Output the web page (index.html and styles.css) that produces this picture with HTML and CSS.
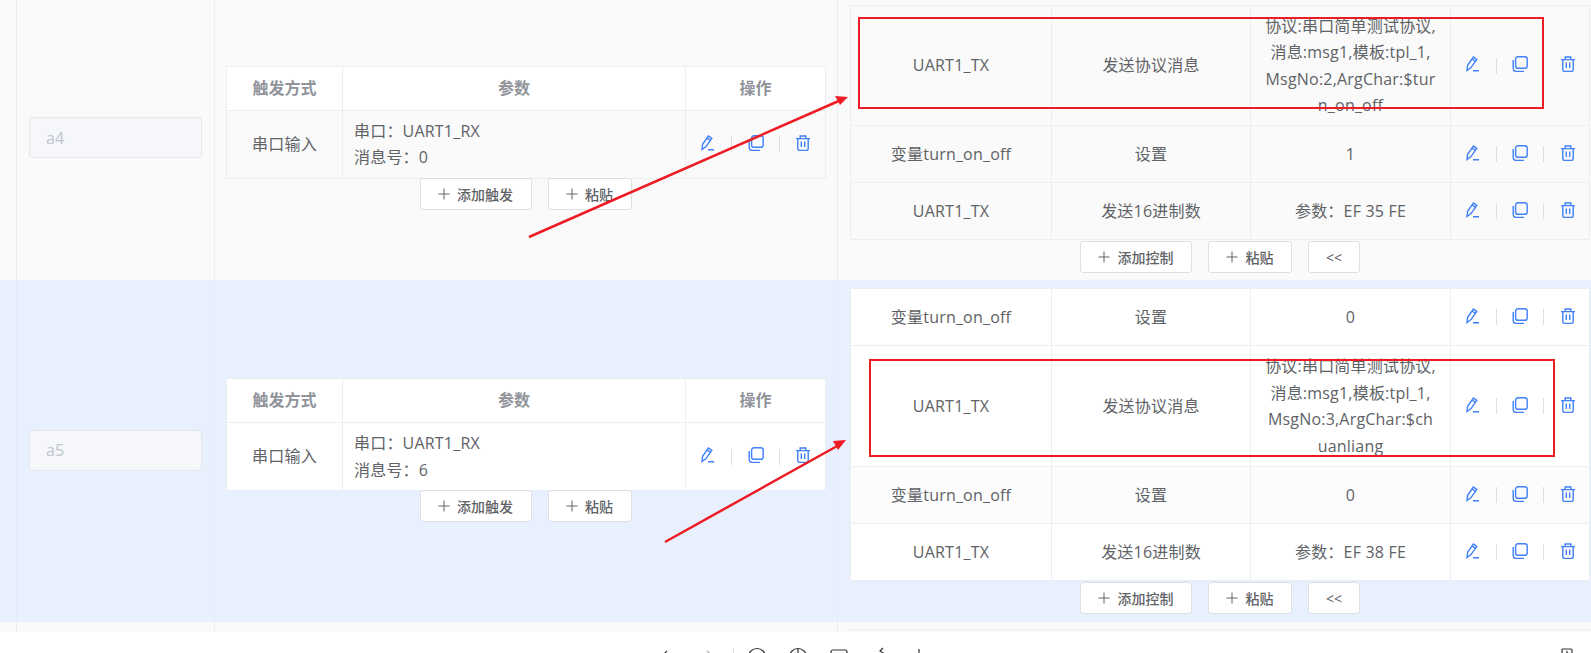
FILE: index.html
```html
<!DOCTYPE html>
<html lang="en">
<head>
    <meta charset="UTF-8">
    <title>Tasks</title>
    <link rel="stylesheet" href="styles.css">
</head>
<body>
    <svg class="icon-defs" width="0" height="0">
        <symbol id="i-edit" viewBox="0 0 16 16">
            <path d="M2 14.5 2.6 9.3 8.4 1.1 11.8 3.5 6 11.6Z M7 3 10.400 5.400 M8 14.8H14"/>
        </symbol>
        <symbol id="i-copy" viewBox="0 0 16 16">
            <rect x="3.6" y="0.7" width="11.6" height="11.6" rx="2.4"/>
            <path d="M1.2 4V12.6A2.8 2.8 0 0 0 4 15.4H12"/>
        </symbol>
        <symbol id="i-trash" viewBox="0 0 16 16">
            <path d="M1 3.6H15 M5.2 3.600V1H10.800V3.600 M2.800 3.600V13.400A2 2 0 0 0 4.800 15.400H11.200A2 2 0 0 0 13.200 13.400V3.600 M6.300 6.600V12 M9.700 6.600V12"/>
        </symbol>
        <symbol id="i-plus" viewBox="0 0 12 12">
            <path d="M6 .5V11.5 M.5 6H11.5"/>
        </symbol>
    </svg>

    <div class="task-list">
        <div class="task-row">
            <div class="cell-index"></div>
            <div class="cell-name"><input class="name-input" value="a4" disabled></div>
            <div class="cell-block cell-trigger">
                <table class="grid-table trigger-table">
                    <colgroup><col class="col-type"><col class="col-param"><col class="col-op"></colgroup>
                    <thead><tr><th>触发方式</th><th>参数</th><th>操作</th></tr></thead>
                    <tbody>
                        <tr>
                            <td>串口输入</td>
                            <td class="param">串口：UART1_RX<br>消息号：0</td>
                            <td><div class="ops">
                                <svg class="op"><use href="#i-edit"/></svg><i class="sep"></i>
                                <svg class="op"><use href="#i-copy"/></svg><i class="sep"></i>
                                <svg class="op"><use href="#i-trash"/></svg>
                            </div></td>
                        </tr>
                    </tbody>
                </table>
                <div class="actions">
                    <button class="btn"><svg class="plus"><use href="#i-plus"/></svg>添加触发</button>
                    <button class="btn"><svg class="plus"><use href="#i-plus"/></svg>粘贴</button>
                </div>
            </div>
            <div class="cell-block cell-last">
                <table class="grid-table control-table">
                    <colgroup><col class="col-a"><col class="col-b"><col class="col-c"><col class="col-op"></colgroup>
                    <tbody>
                        <tr class="tall">
                            <td>UART1_TX</td><td>发送协议消息</td>
                            <td class="wrap">协议:串口简单测试协议,<br>消息:msg1,模板:tpl_1,<br>MsgNo:2,ArgChar:$tur<br>n_on_off</td>
                            <td><div class="ops">
                                <svg class="op"><use href="#i-edit"/></svg><i class="sep"></i>
                                <svg class="op"><use href="#i-copy"/></svg><i class="sep"></i>
                                <svg class="op"><use href="#i-trash"/></svg>
                            </div></td>
                        </tr>
                        <tr>
                            <td>变量turn_on_off</td><td>设置</td><td>1</td>
                            <td><div class="ops">
                                <svg class="op"><use href="#i-edit"/></svg><i class="sep"></i>
                                <svg class="op"><use href="#i-copy"/></svg><i class="sep"></i>
                                <svg class="op"><use href="#i-trash"/></svg>
                            </div></td>
                        </tr>
                        <tr>
                            <td>UART1_TX</td><td>发送16进制数</td><td>参数：EF 35 FE</td>
                            <td><div class="ops">
                                <svg class="op"><use href="#i-edit"/></svg><i class="sep"></i>
                                <svg class="op"><use href="#i-copy"/></svg><i class="sep"></i>
                                <svg class="op"><use href="#i-trash"/></svg>
                            </div></td>
                        </tr>
                    </tbody>
                </table>
                <div class="actions">
                    <button class="btn"><svg class="plus"><use href="#i-plus"/></svg>添加控制</button>
                    <button class="btn"><svg class="plus"><use href="#i-plus"/></svg>粘贴</button>
                    <button class="btn btn-fold">&lt;&lt;</button>
                </div>
            </div>
        </div>

        <div class="task-row selected">
            <div class="cell-index"></div>
            <div class="cell-name"><input class="name-input" value="a5" disabled></div>
            <div class="cell-block cell-trigger">
                <table class="grid-table trigger-table">
                    <colgroup><col class="col-type"><col class="col-param"><col class="col-op"></colgroup>
                    <thead><tr><th>触发方式</th><th>参数</th><th>操作</th></tr></thead>
                    <tbody>
                        <tr>
                            <td>串口输入</td>
                            <td class="param">串口：UART1_RX<br>消息号：6</td>
                            <td><div class="ops">
                                <svg class="op"><use href="#i-edit"/></svg><i class="sep"></i>
                                <svg class="op"><use href="#i-copy"/></svg><i class="sep"></i>
                                <svg class="op"><use href="#i-trash"/></svg>
                            </div></td>
                        </tr>
                    </tbody>
                </table>
                <div class="actions">
                    <button class="btn"><svg class="plus"><use href="#i-plus"/></svg>添加触发</button>
                    <button class="btn"><svg class="plus"><use href="#i-plus"/></svg>粘贴</button>
                </div>
            </div>
            <div class="cell-block cell-last">
                <table class="grid-table control-table">
                    <colgroup><col class="col-a"><col class="col-b"><col class="col-c"><col class="col-op"></colgroup>
                    <tbody>
                        <tr>
                            <td>变量turn_on_off</td><td>设置</td><td>0</td>
                            <td><div class="ops">
                                <svg class="op"><use href="#i-edit"/></svg><i class="sep"></i>
                                <svg class="op"><use href="#i-copy"/></svg><i class="sep"></i>
                                <svg class="op"><use href="#i-trash"/></svg>
                            </div></td>
                        </tr>
                        <tr class="tall taller">
                            <td>UART1_TX</td><td>发送协议消息</td>
                            <td class="wrap">协议:串口简单测试协议,<br>消息:msg1,模板:tpl_1,<br>MsgNo:3,ArgChar:$ch<br>uanliang</td>
                            <td><div class="ops">
                                <svg class="op"><use href="#i-edit"/></svg><i class="sep"></i>
                                <svg class="op"><use href="#i-copy"/></svg><i class="sep"></i>
                                <svg class="op"><use href="#i-trash"/></svg>
                            </div></td>
                        </tr>
                        <tr class="stripe">
                            <td>变量turn_on_off</td><td>设置</td><td>0</td>
                            <td><div class="ops">
                                <svg class="op"><use href="#i-edit"/></svg><i class="sep"></i>
                                <svg class="op"><use href="#i-copy"/></svg><i class="sep"></i>
                                <svg class="op"><use href="#i-trash"/></svg>
                            </div></td>
                        </tr>
                        <tr>
                            <td>UART1_TX</td><td>发送16进制数</td><td>参数：EF 38 FE</td>
                            <td><div class="ops">
                                <svg class="op"><use href="#i-edit"/></svg><i class="sep"></i>
                                <svg class="op"><use href="#i-copy"/></svg><i class="sep"></i>
                                <svg class="op"><use href="#i-trash"/></svg>
                            </div></td>
                        </tr>
                    </tbody>
                </table>
                <div class="actions">
                    <button class="btn"><svg class="plus"><use href="#i-plus"/></svg>添加控制</button>
                    <button class="btn"><svg class="plus"><use href="#i-plus"/></svg>粘贴</button>
                    <button class="btn btn-fold">&lt;&lt;</button>
                </div>
            </div>
        </div>

        <div class="task-row next-row">
            <div class="cell-index"></div>
            <div class="cell-name"></div>
            <div class="cell-block"></div>
            <div class="cell-block cell-last">
                <table class="grid-table control-table">
                    <colgroup><col class="col-a"><col class="col-b"><col class="col-c"><col class="col-op"></colgroup>
                    <tbody><tr><td></td><td></td><td></td><td></td></tr></tbody>
                </table>
            </div>
        </div>
    </div>

    <div class="viewer-bar">
        <svg class="bar-icon bar-first" viewBox="0 0 20 20"><path d="M13 4 6 11 13 18"/></svg>
        <svg class="bar-icon bar-next" viewBox="0 0 20 20"><path d="M7 4 14 11 7 18"/></svg>
        <i class="bar-sep"></i>
        <svg class="bar-icon" viewBox="0 0 20 20"><circle cx="10" cy="10" r="8.5"/></svg>
        <svg class="bar-icon" viewBox="0 0 20 20"><circle cx="10" cy="10" r="8.5"/><path d="M10 1.500V14"/></svg>
        <svg class="bar-icon" viewBox="0 0 20 20"><rect x="2" y="3" width="16" height="14" rx="2"/></svg>
        <svg class="bar-icon bar-turn" viewBox="0 0 20 20"><path d="M2 6.500H17V18 M13 1 10 4 14 6.500"/></svg>
        <svg class="bar-icon" viewBox="0 0 20 20"><path d="M10 2V18"/></svg>
        <svg class="bar-key" viewBox="0 0 12 20"><rect x="1" y="2" width="10" height="16" rx="1"/><path d="M3.500 13 6 5 8.500 13"/></svg>
    </div>

    <!-- red marks drawn on top of the screenshot -->
    <svg class="marks" width="1591" height="653">
        <rect x="859" y="18" width="684" height="90"/>
        <rect x="870" y="360" width="684" height="96"/>
        <path d="M529 237 841 100"/>
        <path d="M665 542 839 445"/>
        <polygon points="848,97 835,96 840,105"/>
        <polygon points="846,440 833,441 838,450"/>
    </svg>
</body>
</html>
```

FILE: styles.css
```css
* {
    margin: 0;
    padding: 0;
    box-sizing: border-box;
}

html, body {
    height: 653px;
    overflow: hidden;
    background: #fff;
}

body {
    position: relative;
    font-family: "Open Sans", "Noto Sans CJK SC", sans-serif;
    font-size: 16px;
    color: #606266;
}

.icon-defs {
    position: absolute;
}

.task-list {
    margin-top: -3px;
}

.task-row {
    display: grid;
    grid-template-columns: 17px 198px 623px 1fr;
    background: #fafafa;
}

.task-row.selected {
    background: #e9f0fd;
}

.task-row > div {
    border-right: 1px solid #ebeef5;
}

.task-row.selected > div {
    border-right-color: #e5ecf8;
}

.task-row > .cell-last {
    border-right: none;
}

.cell-name {
    display: flex;
    align-items: center;
    padding: 0 12px;
}

.name-input {
    width: 173px;
    height: 41px;
    margin-top: -2px;
    padding: 0 16px;
    font: inherit;
    color: #c0c4cc;
    background: #f5f7fa;
    border: 1px solid #e4e7ed;
    border-radius: 4px;
}

.cell-block {
    display: flex;
    flex-direction: column;
    justify-content: center;
    padding: 8px 12px 10px 11px;
}

.cell-block.cell-last {
    padding: 8px 1px 7px 12px;
}

.selected .cell-block.cell-last {
    padding-bottom: 8px;
}

.grid-table {
    width: 100%;
    table-layout: fixed;
    border-collapse: collapse;
    line-height: 26.5px;
    text-align: center;
}

.grid-table th,
.grid-table td {
    height: 57px;
    padding: 0 12px;
    border: 1px solid #ebeef5;
    font-weight: normal;
}

.grid-table td {
    letter-spacing: .2px;
}

.grid-table th {
    height: 44px;
    font-weight: bold;
    color: #909399;
    background: #fff;
}

.trigger-table td {
    height: 68px;
}

.trigger-table .col-type { width: 116px; }
.trigger-table .col-param { width: 343px; }
.col-op { width: 139px; }
.col-a { width: 201px; }
.col-b { width: 199px; }
.col-c { width: 200px; }

.trigger-table .col-op { width: 140px; }

.grid-table td.param {
    padding-left: 11px;
    text-align: left;
}

.grid-table td.wrap {
    white-space: nowrap;
}

.grid-table .tall td {
    height: 120px;
}

.grid-table .taller td {
    height: 121px;
}

.selected .grid-table td {
    background: #fff;
}

.selected .grid-table .stripe td {
    background: #fcfcfd;
}

.ops {
    display: flex;
    align-items: center;
    justify-content: center;
    gap: 15.25px;
}

.op {
    width: 16px;
    height: 16px;
    margin-bottom: 3px;
    fill: none;
    stroke: #4080f8;
    stroke-width: 1.4;
}

.sep {
    width: 1px;
    height: 16px;
    background: #dcdfe6;
}

.actions {
    display: flex;
    justify-content: center;
    gap: 16px;
    margin-top: 1px;
}

.cell-trigger .actions {
    margin-top: -1px;
}

.btn {
    display: flex;
    align-items: center;
    gap: 7px;
    height: 32px;
    padding: 0 17.5px;
    font: inherit;
    font-size: 14px;
    font-weight: 500;
    color: #606266;
    background: #fff;
    border: 1px solid #dcdfe6;
    border-radius: 3px;
}

.btn-fold {
    padding: 0 17px;
    font-weight: normal;
}

.plus {
    width: 12px;
    height: 12px;
    fill: none;
    stroke: #606266;
    stroke-width: 1;
}

.next-row {
    height: 10px;
    overflow: hidden;
}

.next-row .cell-block {
    display: block;
    padding-top: 7px;
}

.viewer-bar {
    display: flex;
    align-items: flex-start;
    height: 22px;
    padding-top: 15px;
    overflow: hidden;
    background: #fff;
}

.bar-icon {
    flex: none;
    width: 20px;
    height: 20px;
    margin-right: 21px;
    fill: none;
    stroke: #333;
    stroke-width: 1.2;
}

.bar-first {
    margin-left: 654px;
    margin-right: 26px;
}

.bar-next {
    stroke: #aaa;
    margin-right: 13px;
}

.bar-turn {
    margin-right: 19px;
}

.bar-sep {
    flex: none;
    width: 1px;
    height: 20px;
    margin-top: 2px;
    margin-right: 13px;
    background: #ddd;
}

.bar-key {
    flex: none;
    width: 12px;
    height: 20px;
    margin-left: auto;
    margin-right: 18px;
    fill: none;
    stroke: #333;
    stroke-width: 1.2;
}

.marks {
    position: absolute;
    left: 0;
    top: 0;
    pointer-events: none;
}

.marks rect {
    fill: none;
    stroke: #ed1c24;
    stroke-width: 2;
}

.marks path {
    fill: none;
    stroke: #ed1c24;
    stroke-width: 2.5;
}

.marks polygon {
    fill: #ed1c24;
}
```
